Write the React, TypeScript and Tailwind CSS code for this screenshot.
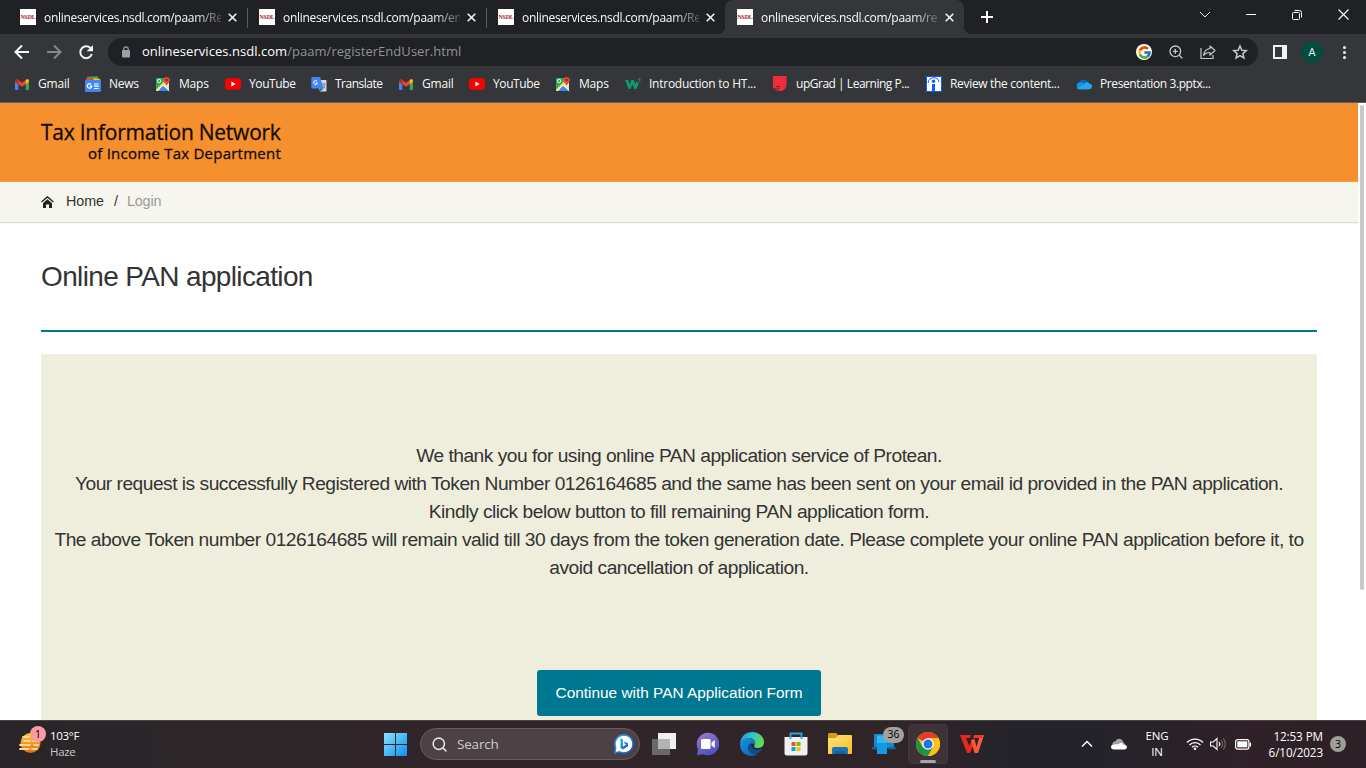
import React from 'react';
import { Search, ZoomIn } from 'lucide-react';
import { FcGoogle } from 'react-icons/fc';

const Gmail = () => (
  <svg width="16" height="16" viewBox="0 0 16 16">
    <path d="M1 4v9.200c0 .5.4.8.9.8H4.300V6.300z" fill="#4285f4" />
    <path d="M15 4v9.200c0 .5-.4.8-.9.8H11.700V6.300z" fill="#34a853" />
    <path d="M1 4.700C1 3.200 2.700 2.800 3.600 3.500L8 6.700 12.400 3.500C13.300 2.800 15 3.200 15 4.700L15 5.800 8 10.800 1 5.800z" fill="#ea4335" />
    <path d="M11.700 4l.7-.5C13.300 2.800 15 3.200 15 4.700v1.300L11.700 8.200z" fill="#fbbc04" />
    <path d="M4.300 4L3.600 3.500C2.700 2.800 1 3.200 1 4.700v1.300L4.300 8.200z" fill="#c5221f" />
  </svg>
);

const News = () => (
  <svg width="16" height="16" viewBox="0 0 16 16">
    <path d="M2 .700l11-.5.700 5H2z" fill="#34a853" />
    <path d="M.7 2.500l7-.5 2 4H1z" fill="#ea4335" />
    <path d="M9 2l6.300 1-.5 4H7z" fill="#fbbc04" />
    <rect y="4" width="16" height="12" rx="1" fill="#4285f4" />
    <path d="M6.200 8.300A2.300 2.300 0 1 0 6.800 10.200H4.600M9 8h4.500M9 10.200h5M9 12.500h4.500" stroke="#fff" strokeWidth="1.200" fill="none" />
  </svg>
);

const Maps = () => (
  <svg width="16" height="16" viewBox="0 0 16 16">
    <rect x="1" y="2" width="13" height="13" rx="1" fill="#34a853" />
    <path d="M1 13.500L12 2.500h2v3L4 15H2c-.6 0-1-.5-1-1z" fill="#fbdc5c" />
    <path d="M8 9.500l6 5V6z" fill="#dfe3e8" />
    <path d="M7.800 9.500L3 15h10z" fill="#4285f4" />
    <path d="M7.800 9.200L2.300 15M8 9l6.200 6" stroke="#fff" strokeWidth="1" />
    <circle cx="4.200" cy="5" r="1.700" fill="none" stroke="#fff" strokeWidth=".9" />
    <path d="M11.700 10c-.2-2-3-3.200-3-6a3.050 3.050 0 0 1 6.100 0c0 2.800-2.900 4-3.100 6z" fill="#ea4335" />
    <circle cx="11.700" cy="4" r="1.100" fill="#8c1a13" />
  </svg>
);

const YouTube = () => (
  <svg width="16" height="16" viewBox="0 0 16 16">
    <rect y="2.300" width="16" height="11.400" rx="3" fill="#f00" />
    <path d="M6.400 5.600v4.800L10.600 8z" fill="#fff" />
  </svg>
);

const Translate = () => (
  <svg width="16" height="16" viewBox="0 0 16 16">
    <path d="M6 4h8.500c.6 0 1 .4 1 1v9.500c0 .6-.4 1-1 1H9z" fill="#d4d6d9" />
    <path d="M1.300 1H9l3.600 11.500H1.300c-.6 0-1-.4-1-1V2c0-.6.400-1 1-1z" fill="#4285f4" />
    <path d="M8.500 12.500h4l-3 3z" fill="#3459b5" />
    <path d="M6 5.200A1.900 1.900 0 1 0 6.500 7H4.600" stroke="#fff" strokeWidth="1" fill="none" />
    <path d="M10.500 8h4.300M12.600 7v1M14 8.200c-.4 1.800-1.500 3-2.600 4M11.500 9l3 3.500" stroke="#607d9b" strokeWidth=".8" fill="none" />
  </svg>
);

const W3 = () => (
  <svg width="16" height="16" viewBox="0 0 16 16">
    <path d="M0 4h3.200l1.700 4.500L6.300 4h2.500l1.500 4.500L11.500 5 13.700 8l-2.500 5H9.500L7.400 8.500 5.400 13H3.800z" fill="#0b9d6a" />
    <path d="M13 3h2.300l-1.200 1.500c1.600 0 1.600 2.200-.9 2" stroke="#0b9d6a" strokeWidth=".9" fill="none" />
  </svg>
);

const UpGrad = () => (
  <svg width="16" height="16" viewBox="0 0 16 16">
    <path d="M1 0h13.500v8.500c0 4-2.800 6.500-6.500 6.500-3 0-6.200-1.200-7-3.500z" fill="#ee2c3c" />
    <path d="M4 10.500h3v2M1.500 11.800c1.300 1.600 4.500 1.500 5.500.5" stroke="#6d2230" strokeWidth="1" fill="none" />
  </svg>
);

const Review = () => (
  <svg width="16" height="16" viewBox="0 0 16 16">
    <rect width="16" height="16" fill="#0b5cff" />
    <rect x="1" y="1" width="14" height="14" fill="#fff" />
    <circle cx="7.500" cy="5.200" r="1.700" fill="#0b5cff" />
    <path d="M6 8h3v7H6z" fill="#0b5cff" />
    <path d="M2 7c.5-3.500 3-5.300 6-5.300 2.800 0 4.500 1.500 5 4.300" stroke="#0b5cff" fill="none" />
  </svg>
);

const OneDrive = () => (
  <svg width="16" height="16" viewBox="0 0 16 16">
    <path d="M3 6.500A5 5 0 0 1 12 6l-2 6H2z" fill="#0364b8" />
    <path d="M3.500 6.300c2-.6 3 .2 4.500 1.200l6 4.500-1 1.200H3.600a3.500 3.500 0 0 1-.1-6.900z" fill="#1490df" />
    <path d="M8 8.500c1-2.300 4-3 5.500-.8 2 .2 2.500 1.600 2.500 2.700 0 1.500-1 2.800-2.800 2.800H3c-1 0-1.700-.5-2-1z" fill="#28a8ea" />
  </svg>
);

const Nsdl = () => (
  <div className="flex h-4 w-4 shrink-0 items-center justify-center bg-white">
    <span className="font-['Liberation_Serif',serif] text-[6px] leading-none font-bold tracking-[-0.2px] text-[#a8202c]">NSDL</span>
  </div>
);

const Close = () => (
  <svg width="9" height="9" viewBox="0 0 9 9" className="shrink-0">
    <path d="M.7.700l7.600 7.600M8.300.700L.7 8.300" stroke="#f1f3f4" strokeWidth="1.600" />
  </svg>
);

const tabs = [
  { path: '/Re', active: false, sep: true },
  { path: '/en', active: false, sep: true },
  { path: '/Re', active: false, sep: false },
  { path: '/re', active: true, sep: false },
];

function TabStrip() {
  return (
    <div className="flex h-[34px] bg-[#202124] pl-2">
      {tabs.map((t, i) => (
        <div
          key={i}
          className={
            t.active
              ? 'relative flex w-[239px] items-center rounded-t-lg bg-[#35363a] pl-3'
              : 'relative flex w-[239px] items-center pl-3'
          }
        >
          <Nsdl />
          <div className="ml-2 w-[177px] pb-[2px] whitespace-nowrap [mask-image:linear-gradient(to_right,#000_150px,transparent_184px)]">
            <span className="text-[12px] leading-4 tracking-[-0.3px] text-[#f8f9fa]">onlineservices.nsdl.com/paam{t.path}</span>
          </div>
          <div className="ml-[7px] flex">
            <Close />
          </div>
          {t.sep && <div className="absolute top-2 right-[-1px] h-5 w-px bg-[#5a5c60]" />}
          {t.active && (
            <>
              <div className="absolute bottom-0 -left-2 h-2 w-2 bg-[radial-gradient(circle_at_0_0,#202124_8px,#35363a_8.500px)]" />
              <div className="absolute -right-2 bottom-0 h-2 w-2 bg-[radial-gradient(circle_at_100%_0,#202124_8px,#35363a_8.500px)]" />
            </>
          )}
        </div>
      ))}
      <div className="ml-[17px] flex w-3 items-center">
        <svg width="12" height="12" viewBox="0 0 12 12">
          <path d="M6 0v12M0 6h12" stroke="#fff" strokeWidth="2" />
        </svg>
      </div>
      <div className="ml-auto flex h-[29px] items-center text-white">
        <div className="flex w-[46px] justify-center">
          <svg width="12" height="8" viewBox="0 0 12 8"><path d="M1 1l5 5 5-5" stroke="#e8eaed" fill="none" /></svg>
        </div>
        <div className="flex w-[46px] justify-center">
          <div className="h-px w-[10px] bg-white" />
        </div>
        <div className="flex w-[46px] justify-center">
          <svg width="10" height="10" viewBox="0 0 10 10" fill="none" stroke="#fff">
            <rect x=".5" y="2.500" width="7" height="7" rx="1" />
            <path d="M2.500.500H7.500a2 2 0 0 1 2 2V7.500" />
          </svg>
        </div>
        <div className="flex w-[46px] justify-center">
          <svg width="11" height="11" viewBox="0 0 11 11"><path d="M.5.500l10 10M10.500.500l-10 10" stroke="#fff" strokeWidth="1.100" /></svg>
        </div>
      </div>
    </div>
  );
}

function Toolbar() {
  return (
    <div className="flex h-9 items-center bg-[#35363a] pl-[14px]">
      <svg width="16" height="16" viewBox="0 0 16 16" fill="none" stroke="#f1f3f4" strokeWidth="2">
        <path d="M15 8H2M8 1.500L1.500 8 8 14.500" />
      </svg>
      <svg className="ml-4" width="16" height="16" viewBox="0 0 16 16" fill="none" stroke="#85878b" strokeWidth="2">
        <path d="M1 8h13M8 1.500L14.500 8 8 14.500" />
      </svg>
      <svg className="ml-4" width="16" height="16" viewBox="0 0 16 16">
        <path d="M13 4.800A5.900 5.900 0 1 0 13.800 10" fill="none" stroke="#f1f3f4" strokeWidth="2" />
        <path d="M15 1v6.300H8.700z" fill="#f1f3f4" />
      </svg>
      <div className="ml-[14px] flex h-7 w-[1150px] items-center rounded-full bg-[#202124] pl-[14px]">
        <svg width="8" height="12" viewBox="0 0 8 12">
          <rect y="4" width="8" height="7.500" rx="1" fill="#9aa0a6" />
          <path d="M1.800 5V3a2.200 2.200 0 0 1 4.400 0v2" fill="none" stroke="#9aa0a6" strokeWidth="1.200" />
        </svg>
        <span className="ml-3 w-[330px] text-[13px] tracking-[0.040px] whitespace-nowrap text-[#909397]">
          <span className="text-white">onlineservices.nsdl.com</span>/paam/registerEndUser.html
        </span>
        <div className="mr-[10px] ml-auto flex items-center gap-4 text-[#c4c7cb]">
          <div className="flex h-4 w-4 items-center justify-center rounded-full bg-white">
            <FcGoogle size={15} />
          </div>
          <ZoomIn size={16} strokeWidth={2} />
          <svg width="16" height="16" viewBox="0 0 16 16" fill="none" stroke="currentColor" strokeWidth="1.200">
            <path d="M1 4v10.500h12V11" />
            <path d="M10 2l5 4.500-5 4.500V8.500C7 8.500 5 9.500 3.700 11.500 4 8 6 5 10 4.500z" strokeLinejoin="round" />
          </svg>
          <svg width="16" height="16" viewBox="0 0 16 16" fill="none" stroke="currentColor" strokeWidth="1.500">
            <path d="M8 2l1.800 4.200 4.500.4-3.400 3 1 4.400L8 11.700 4.100 14l1-4.400-3.400-3 4.500-.4z" />
          </svg>
        </div>
      </div>
      <svg className="ml-[15px]" width="14" height="14" viewBox="0 0 14 14">
        <path d="M0 0h14v14H0zM2 2v10h7V2z" fill="#f1f3f4" fillRule="evenodd" />
      </svg>
      <div className="ml-[14px] flex h-[22px] w-[22px] items-center justify-center rounded-full bg-[#004d40] text-[11px] text-white">A</div>
      <div className="ml-5 flex flex-col gap-[2px]">
        <div className="h-[3px] w-[3px] rounded-full bg-[#f1f3f4]" />
        <div className="h-[3px] w-[3px] rounded-full bg-[#f1f3f4]" />
        <div className="h-[3px] w-[3px] rounded-full bg-[#f1f3f4]" />
      </div>
    </div>
  );
}

const bookmarks = [
  { icon: <Gmail />, label: 'Gmail', w: 'w-[71px] tracking-[-0.2px]' },
  { icon: <News />, label: 'News', w: 'w-[70px] tracking-[-0.300px]' },
  { icon: <Maps />, label: 'Maps', w: 'w-[70px] tracking-[-0.2px]' },
  { icon: <YouTube />, label: 'YouTube', w: 'w-[86px] tracking-[-0.400px]' },
  { icon: <Translate />, label: 'Translate', w: 'w-[87px] tracking-[-0.500px]' },
  { icon: <Gmail />, label: 'Gmail', w: 'w-[71px] tracking-[-0.2px]' },
  { icon: <YouTube />, label: 'YouTube', w: 'w-[86px] tracking-[-0.400px]' },
  { icon: <Maps />, label: 'Maps', w: 'w-[70px] tracking-[-0.2px]' },
  { icon: <W3 />, label: 'Introduction to HT...', w: 'w-[147px] tracking-[-0.250px]' },
  { icon: <UpGrad />, label: 'upGrad | Learning P...', w: 'w-[154px] tracking-[-0.480px]' },
  { icon: <Review />, label: 'Review the content...', w: 'w-[150px] tracking-[-0.320px]' },
  { icon: <OneDrive />, label: 'Presentation 3.pptx...', w: 'w-[150px] tracking-[-0.400px]' },
];

function Bookmarks() {
  return (
    <div className="flex h-[33px] border-b border-[#5f6165] bg-[#35363a] pb-1 pl-[14px]">
      {bookmarks.map((b, i) => (
        <div key={i} className={`flex shrink-0 items-center gap-2 text-[12px] whitespace-nowrap text-[#f8f9fa] ${b.w}`}>
          {b.icon}
          <span>{b.label}</span>
        </div>
      ))}
    </div>
  );
}

function Page() {
  return (
    <div className="flex h-[617px] bg-white font-['Liberation_Sans',Arial,sans-serif] text-[#333]">
      <main className="flex w-[1358px] flex-col overflow-hidden">
        <header className="h-[79px] shrink-0 border-b border-[#f79a3e] bg-[#f6902e] pt-[15px] pl-[41px] font-['Open_Sans','Noto_Sans',sans-serif] text-[#120c06]">
          <div className="flex w-[240px] flex-col whitespace-nowrap [-webkit-text-stroke:0.300px_#120c06]">
            <div className="text-[21px] leading-[28px] tracking-[-0.240px]">Tax Information Network</div>
            <div className="pl-[47px] text-[15px] leading-[14px] tracking-[0.240px]">of Income Tax Department</div>
          </div>
        </header>
        <nav className="flex h-[41px] shrink-0 items-center border-b border-[#dcdcdc] bg-[#f6f6ee] pl-[41px] text-[14.300px] shadow-[0_1px_1px_#00000008]">
          <svg width="13" height="12" viewBox="0 0 13 12">
            <path d="M.5 6L6.500.900 12.500 6" stroke="#222" strokeWidth="1.300" fill="none" />
            <path d="M6.500 3.300L11 7.200V12H8V8.500H5V12H2V7.200z" fill="#222" />
          </svg>
          <span className="ml-3 tracking-[-0.060px] pb-px">Home</span>
          <span className="ml-[10px] pb-px">/</span>
          <span className="ml-[9px] pb-px tracking-[-0.1px] text-[#999]">Login</span>
        </nav>
        <section className="flex grow flex-col px-[41px]">
          <h1 className="mt-[36px] h-[73px] border-b-2 border-[#007791] text-[28px] leading-[36px] tracking-[-0.640px]">Online PAN application</h1>
          <div className="mt-[22px] flex grow flex-col items-center bg-[#efeedd] pt-[88px] text-center">
            <div className="text-[19.200px] leading-7 tracking-[-0.5px] whitespace-nowrap">
              <p>We thank you for using online PAN application service of Protean.</p>
              <p>Your request is successfully Registered with Token Number 0126164685 and the same has been sent on your email id provided in the PAN application.</p>
              <p>Kindly click below button to fill remaining PAN application form.</p>
              <p>The above Token number 0126164685 will remain valid till 30 days from the token generation date. Please complete your online PAN application before it, to</p>
              <p>avoid cancellation of application.</p>
            </div>
            <button className="mt-[88px] h-[46px] w-[284px] shrink-0 rounded-[3px] bg-[#007791] text-[15.400px] whitespace-nowrap text-white">Continue with PAN Application Form</button>
          </div>
        </section>
      </main>
      <div className="w-2 pt-[2px] pl-[2px]">
        <div className="h-[485px] w-1 rounded-full bg-[#c8c8c8]" />
      </div>
    </div>
  );
}

const Haze = () => (
  <svg width="24" height="24" viewBox="0 0 24 24">
    <defs>
      <linearGradient id="sun" x1="0" y1="0" x2="0" y2="1">
        <stop offset="0" stopColor="#fbcb2c" /><stop offset="1" stopColor="#ea6a12" />
      </linearGradient>
    </defs>
    <circle cx="12.500" cy="12" r="10" fill="url(#sun)" />
    <path d="M5 6h6M6 10h6M15 10h5M2 14h10M16 14h4M2 18h9M14 18h5" stroke="#f3d79e" strokeWidth="1.800" strokeLinecap="round" />
  </svg>
);

const Start = () => (
  <svg width="24" height="24" viewBox="0 0 24 24">
    <defs>
      <linearGradient id="win" x1="0" y1="0" x2="1" y2="1">
        <stop offset="0" stopColor="#8be4ff" /><stop offset="1" stopColor="#0a90ef" />
      </linearGradient>
    </defs>
    <path d="M0 1h11v11H0zM12 1H23v11H12zM0 13h11v11H0zM12 13H23v11H12z" fill="url(#win)" />
  </svg>
);

const Bing = () => (
  <svg width="20" height="20" viewBox="0 0 20 20">
    <defs>
      <linearGradient id="bing" x1="0" y1="0" x2="1" y2="1">
        <stop offset="0" stopColor="#28b7ef" /><stop offset="1" stopColor="#1a4fc4" />
      </linearGradient>
    </defs>
    <path d="M10 1a9 9 0 1 1-4.500 16.800L1 19l.6-6A9 9 0 0 1 10 1z" fill="#fff" stroke="url(#bing)" strokeWidth="1.500" />
    <path d="M6.500 4.200l2.400 1v7.300l3.300-1.900-1.500-.8-1-2.300 4.300 1.700v3l-5 3.200-2.500-1.500z" fill="url(#bing)" />
  </svg>
);

const TaskView = () => (
  <svg width="24" height="24" viewBox="0 0 24 24">
    <rect x="6" y="1" width="18" height="16" fill="#f0f0f0" />
    <rect y="7" width="18" height="16" fill="#6b6869" />
    <rect x="6" y="7" width="12" height="10" fill="#b4b3b3" />
  </svg>
);

const Chat = () => (
  <svg width="24" height="24" viewBox="0 0 24 24">
    <defs>
      <linearGradient id="chat" x1="0" y1="0" x2=".5" y2="1">
        <stop offset="0" stopColor="#a17bc1" /><stop offset="1" stopColor="#4f52c8" />
      </linearGradient>
    </defs>
    <path d="M12 .700a11.300 11.300 0 1 1-5 21.500L1 23.300l1-6A11.300 11.300 0 0 1 12 .700z" fill="url(#chat)" />
    <rect x="5" y="7" width="9.500" height="10" rx="1.200" fill="#fff" />
    <path d="M15.500 10.500l3.300-2.500v8l-3.300-2.500z" fill="#fff" />
  </svg>
);

const Edge = () => (
  <svg width="24" height="24" viewBox="0 0 24 24">
    <defs>
      <linearGradient id="ed1" x1="0" y1="0" x2="1" y2=".4">
        <stop offset="0" stopColor="#1e9be2" /><stop offset=".5" stopColor="#33c2c6" /><stop offset="1" stopColor="#63da4e" />
      </linearGradient>
      <linearGradient id="ed2" x1="0" y1="0" x2="1" y2="1">
        <stop offset="0" stopColor="#1597e3" /><stop offset="1" stopColor="#0d5ba9" />
      </linearGradient>
    </defs>
    <path d="M.2 11C.8 4.600 5.800 0 12.200 0 19.500 0 24 5.200 24 10.300c0 3.700-2.700 5.700-5.800 5.700-2.700 0-4.200-1-4.200-1.800 0-.7 1.200-1.200 1.200-3C15.200 8.300 12.700 6 9 6 5 6 2 8 .2 11z" fill="url(#ed1)" />
    <path d="M.1 12.500C.4 8.500 4.200 6 8.400 6c4 0 6.800 2.300 6.800 5.200 0 1-.4 1.700-.8 2.200C13.800 10.500 8.200 11 8 15.500c0 5 5.700 7.500 9.700 5.500-1.500 1.800-3.500 3-6 3C4.800 24-.2 18.500.1 12.500z" fill="url(#ed2)" />
    <path d="M8 15.500c0-2 1.300-3.500 3-4.200-.7 4.500 4.500 8.200 9.800 5.500 1-.4 1.500.3 1 1-4 6.200-13.800 4.600-13.800-2.300z" fill="#134b91" />
  </svg>
);

const Store = () => (
  <svg width="24" height="24" viewBox="0 0 24 24">
    <path d="M.5 5h23v16a2.500 2.500 0 0 1-2.500 2.500H3A2.500 2.500 0 0 1 .5 21z" fill="#f0f0f1" />
    <path d="M6.500 7V1.500h11V7" fill="none" stroke="#22a9e0" strokeWidth="1.800" />
    <rect x="7.500" y="10" width="4" height="4" fill="#f25022" />
    <rect x="12.500" y="10" width="4" height="4" fill="#7fba00" />
    <rect x="7.500" y="15" width="4" height="4" fill="#00a4ef" />
    <rect x="12.500" y="15" width="4" height="4" fill="#ffb900" />
  </svg>
);

const Folder = () => (
  <svg width="24" height="24" viewBox="0 0 24 24">
    <defs>
      <linearGradient id="fold" x1="0" y1="0" x2="1" y2="1">
        <stop offset="0" stopColor="#ffe27c" /><stop offset="1" stopColor="#fdbb25" />
      </linearGradient>
    </defs>
    <path d="M0 2.500C0 1.500.7 1 1.500 1H8l2.500 2.500V8H0z" fill="#d79a12" />
    <path d="M0 6h8l2.500-3H23c.6 0 1 .4 1 1v17c0 .6-.4 1-1 1H1c-.6 0-1-.4-1-1z" fill="url(#fold)" />
    <path d="M4 22v-5a2 2 0 0 1 2-2h12a2 2 0 0 1 2 2v5z" fill="#1575bd" />
    <path d="M7 19h10v3H7z" fill="#1b5f94" />
  </svg>
);

const PhoneLink = () => (
  <svg width="24" height="24" viewBox="0 0 24 24">
    <path d="M2 2h20v14H2z" fill="#1389d2" />
    <path d="M0 15h7l-2 2.500H0zM17 15h7l-1 2.500h-7z" fill="#12639d" />
    <path d="M5 3.500h10V21H5z" fill="#2fb9ef" />
    <path d="M5 11h10v11H5z" fill="#1798dd" />
  </svg>
);

const Chrome = () => (
  <svg width="24" height="24" viewBox="0 0 24 24">
    <circle cx="12" cy="12" r="12" fill="#fbc116" />
    <path d="M12 12L1.600 6A12 12 0 0 1 22.400 6H12z" fill="#e33b2e" />
    <path d="M12 12L6.800 15 1.600 6A12 12 0 0 0 12 24l5.200-9z" fill="#229342" />
    <path d="M12 6h10.400A12 12 0 0 1 12 24l5.200-9z" fill="#fbc116" />
    <circle cx="12" cy="12" r="5.800" fill="#fff" />
    <circle cx="12" cy="12" r="4.500" fill="#2372e8" />
  </svg>
);

const Wps = () => (
  <svg width="24" height="20" viewBox="0 0 24 20">
    <path d="M0 1h11l-1 3H6l3 7.500L12 6l2 4-4 9H7z" fill="#e5281b" />
    <path d="M11 6l3.500-1 2 8L20 1h4l-6 18h-3.500z" fill="#ff5a36" />
    <path d="M14 1h10l-1.200 3H13z" fill="#f23a22" />
  </svg>
);

const Cell = ({ children }: { children: React.ReactNode }) => (
  <div className="relative flex h-full w-11 items-center justify-center">{children}</div>
);

function Taskbar() {
  return (
    <div className="flex h-12 items-center border-t border-[#4b4548] bg-[linear-gradient(to_right,#292529_0px,#2c2629_200px,#31252a_450px,#2f2529_900px,#24232a_1020px,#25232a_1100px,#2f2127_1250px,#2b2126_1366px)] pb-px text-[12px] text-white">
      <div className="relative ml-[18px] flex h-full w-8 items-center pb-[2px]">
        <Haze />
        <div className="absolute top-[5px] left-3 flex h-4 w-4 items-center justify-center rounded-full bg-[#ff99a4] text-[11px] text-black">1</div>
      </div>
      <div className="w-[334px] text-[11.500px] leading-4 tracking-[-0.3px]">
        <div>103°F</div>
        <div className="text-[#c9c6c7]">Haze</div>
      </div>
      <Start />
      <div className="mr-[2px] ml-[12px] flex h-8 w-[220px] items-center rounded-full border border-[#665c60] bg-[#4c4246] pr-[5px] pl-[10px]">
        <Search size={17} strokeWidth={2.200} color="#e6e4e5" />
        <span className="ml-[9px] text-[13.500px] tracking-[-0.2px] text-[#cfcbcd]">Search</span>
        <div className="ml-auto"><Bing /></div>
      </div>
      <Cell><TaskView /></Cell>
      <Cell><Chat /></Cell>
      <Cell><Edge /></Cell>
      <Cell><Store /></Cell>
      <Cell><Folder /></Cell>
      <Cell>
        <PhoneLink />
        <div className="absolute top-[6px] left-[21px] flex h-4 w-[21px] items-center justify-center rounded-full bg-[#a3a19f] text-[10.500px] text-black">36</div>
      </Cell>
      <Cell>
        <div className="flex h-10 w-10 items-center justify-center rounded border border-[#44393e] bg-[#3d3237]"><Chrome /></div>
        <div className="absolute bottom-[4px] h-[3px] w-4 rounded-full bg-[#a9a4a6]" />
      </Cell>
      <Cell><Wps /></Cell>
      <div className="ml-auto flex h-full items-center">
        <svg width="12" height="8" viewBox="0 0 12 8"><path d="M1 6.500L6 1.500l5 5" stroke="#fff" strokeWidth="1.500" fill="none" /></svg>
        <svg className="ml-[18px]" width="16" height="12" viewBox="0 0 16 12">
          <path d="M1.500 7C1 4 3.500 3.500 4.500 3.300 6 0 10.500 0 12 3.500l2.500 3.500z" fill="#a5a1a3" />
          <path d="M3 6.500c2-.5 3-.5 4.500 0C9 4.500 11.500 4.700 12.500 6.700c2.500-.2 3.500 1 3.500 2.300 0 1.500-1.200 2.500-2.500 2.500H3C1.200 11.500 0 10.300 0 9s1-2.500 3-2.500z" fill="#fff" />
        </svg>
        <div className="ml-[18px] w-6 text-center text-[11.500px] leading-4 tracking-[-0.1px]">
          <div>ENG</div>
          <div>IN</div>
        </div>
        <svg className="ml-[17px]" width="18" height="14" viewBox="0 0 18 14" fill="none" stroke="#fff" strokeWidth="1.300">
          <path d="M1 5.500a11 11 0 0 1 16 0M3.500 8a7.700 7.700 0 0 1 11 0M6 10.300a4.300 4.300 0 0 1 6 0" />
          <circle cx="9" cy="11.800" r="1.300" fill="#fff" stroke="none" />
        </svg>
        <svg className="ml-[6px]" width="17" height="14" viewBox="0 0 17 14" fill="none" stroke="#fff" strokeWidth="1.100">
          <path d="M.6 5h2.700L7 1.500v11L3.300 9H.6z" />
          <path d="M9 5a3 3 0 0 1 0 4" />
          <path d="M11 3a6 6 0 0 1 0 8M13.300 1.500a8.500 8.500 0 0 1 0 11" stroke="#777073" />
        </svg>
        <svg className="ml-[8px]" width="17" height="11" viewBox="0 0 17 11">
          <rect x=".6" y=".6" width="13.300" height="9.500" rx="2" fill="none" stroke="#fff" strokeWidth="1.200" />
          <rect x="2.300" y="2.300" width="10" height="6" fill="#fff" />
          <path d="M15.300 3.500v4" stroke="#fff" strokeWidth="1.500" />
        </svg>
        <div className="ml-[9px] w-[62px] text-right text-[11.700px] leading-4 tracking-[-0.1px] whitespace-nowrap">
          <div>12:53 PM</div>
          <div>6/10/2023</div>
        </div>
        <div className="mr-5 ml-[7px] flex h-4 w-4 items-center justify-center rounded-full bg-[#9f9c9a] text-[10px] text-black">3</div>
      </div>
    </div>
  );
}

export default function App() {
  return (
    <div className="flex h-[768px] w-[1366px] flex-col overflow-hidden font-['Open_Sans','Noto_Sans',sans-serif]">
      <TabStrip />
      <Toolbar />
      <Bookmarks />
      <Page />
      <Taskbar />
    </div>
  );
}
